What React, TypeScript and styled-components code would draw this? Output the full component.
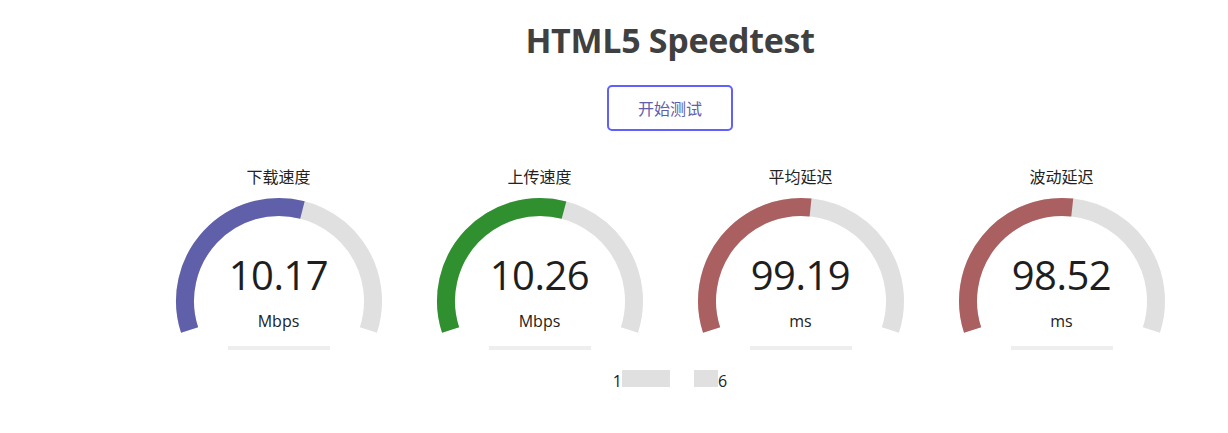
import React from "react";
import styled, { createGlobalStyle } from "styled-components";

const GlobalStyle = createGlobalStyle`
  html, body {
    margin: 0;
    padding: 0;
    background: #ffffff;
  }
  body {
    font-family: "Open Sans", "Noto Sans CJK SC", sans-serif;
  }
`;

const Page = styled.div`
  width: 100%;
  box-sizing: border-box;
  padding-left: 112px;
  display: flex;
  flex-direction: column;
  align-items: center;
  text-align: center;
`;

const Title = styled.h1`
  margin: 18px 0 0;
  font-size: 34px;
  line-height: 44px;
  letter-spacing: -0.3px;
  font-weight: 700;
  color: #404040;
`;

const StartButton = styled.div`
  margin-top: 23px;
  width: 126px;
  height: 46px;
  box-sizing: border-box;
  border: 2px solid #6060ff;
  border-radius: 5px;
  display: flex;
  align-items: center;
  justify-content: center;
  color: #6060aa;
  font-size: 16px;
  cursor: pointer;
`;

const GaugeRow = styled.div`
  margin-top: 29px;
  display: flex;
  gap: 5px;
`;

const GaugeBox = styled.div`
  position: relative;
  width: 256px;
  height: 200px;
  display: flex;
  flex-direction: column;
  align-items: center;
`;

const GaugeCanvas = styled.svg`
  position: absolute;
  inset: 0;
  width: 256px;
  height: 200px;
`;

const TestName = styled.div`
  position: relative;
  margin-top: 7px;
  font-size: 16px;
  line-height: 20px;
  color: #222222;
`;

const MeterText = styled.div`
  position: relative;
  margin-top: 63px;
  font-size: 40px;
  line-height: 50px;
  letter-spacing: -0.5px;
  color: #1e1e1e;
`;

const Unit = styled.div`
  position: relative;
  margin-top: 11px;
  font-size: 16px;
  line-height: 20px;
  color: #222222;
`;

const IpLine = styled.div`
  margin-top: 10px;
  font-size: 16px;
  line-height: 20px;
  color: #202020;
  white-space: nowrap;
`;

const Redacted = styled.span<{ $w: number; $gap?: number }>`
  display: inline-block;
  width: ${(p) => p.$w}px;
  height: 17px;
  margin-left: ${(p) => p.$gap ?? 0}px;
  background: #e0e0e0;
  vertical-align: baseline;
`;

const CX = 128;
const CY = 141;
const R = 94;
const START = -198;
const SPAN = 216;

const pt = (deg: number) => {
  const a = (deg * Math.PI) / 180;
  return [CX + R * Math.cos(a), CY + R * Math.sin(a)];
};

const arcPath = (amount: number) => {
  const sweep = amount * SPAN;
  const [x1, y1] = pt(START);
  const [x2, y2] = pt(START + sweep);
  const large = sweep > 180 ? 1 : 0;
  return `M ${x1.toFixed(2)} ${y1.toFixed(2)} A ${R} ${R} 0 ${large} 1 ${x2.toFixed(2)} ${y2.toFixed(2)}`;
};

const mbpsToAmount = (s: number) => 1 - 1 / Math.pow(1.3, Math.sqrt(s));

type GaugeProps = {
  name: string;
  value: string;
  unit: string;
  amount: number;
  color: string;
};

const Gauge: React.FC<GaugeProps> = ({ name, value, unit, amount, color }) => (
  <GaugeBox>
    <GaugeCanvas viewBox="0 0 256 200">
      <path d={arcPath(1)} fill="none" stroke="#e0e0e0" strokeWidth={18} />
      <path d={arcPath(amount)} fill="none" stroke={color} strokeWidth={18} />
      <rect x={77} y={186} width={102} height={4} fill="#eeeeee" />
    </GaugeCanvas>
    <TestName>{name}</TestName>
    <MeterText>{value}</MeterText>
    <Unit>{unit}</Unit>
  </GaugeBox>
);

export default function App() {
  return (
    <>
      <GlobalStyle />
      <Page>
        <Title>HTML5 Speedtest</Title>
        <StartButton>开始测试</StartButton>
        <GaugeRow>
          <Gauge name="下载速度" value="10.17" unit="Mbps" amount={mbpsToAmount(10.17)} color="#6060aa" />
          <Gauge name="上传速度" value="10.26" unit="Mbps" amount={mbpsToAmount(10.26)} color="#309030" />
          <Gauge name="平均延迟" value="99.19" unit="ms" amount={0.527} color="#aa6060" />
          <Gauge name="波动延迟" value="98.52" unit="ms" amount={0.529} color="#aa6060" />
        </GaugeRow>
        <IpLine>
          1<Redacted $w={48} />
          <Redacted $w={24} $gap={24} />6
        </IpLine>
      </Page>
    </>
  );
}
